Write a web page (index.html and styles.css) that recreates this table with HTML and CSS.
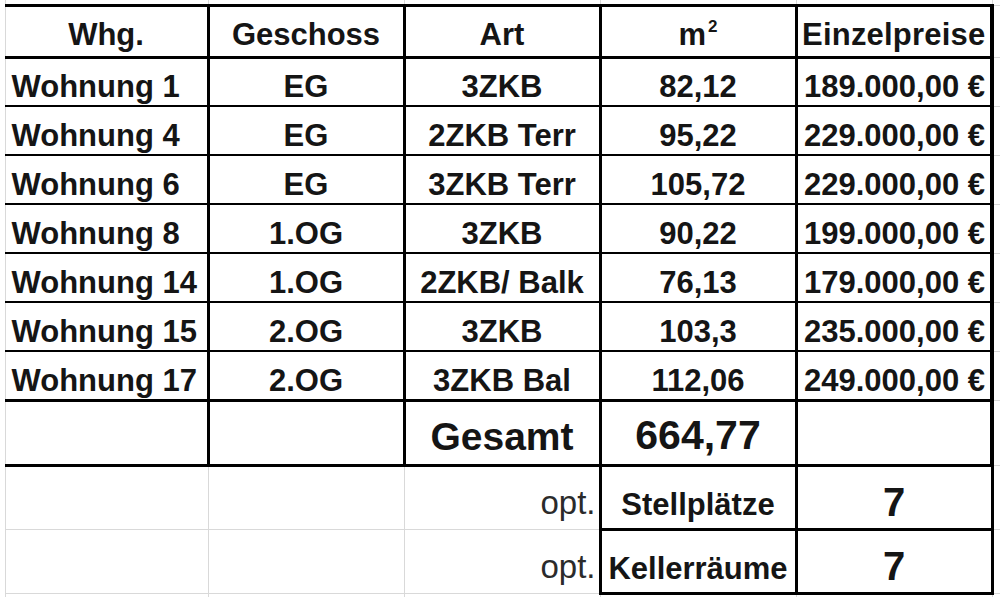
FILE: index.html
```html
<!DOCTYPE html>
<html lang="de">
<head>
<meta charset="utf-8">
<title>Wohnungen</title>
<link rel="stylesheet" href="styles.css">
</head>
<body>
<table class="sheet">
  <colgroup>
    <col class="c-edge">
    <col class="c-a">
    <col class="c-std">
    <col class="c-std">
    <col class="c-std">
    <col class="c-std">
    <col class="c-f">
  </colgroup>
  <tr class="r-top"><td class="edge"></td><td></td><td></td><td></td><td></td><td></td><td class="f"></td></tr>
  <tr class="r-head">
    <td class="edge"></td>
    <th class="t first">Whg.</th>
    <th class="t">Geschoss</th>
    <th class="t">Art</th>
    <th class="t">m<sup>2</sup></th>
    <th class="t last wide">Einzelpreise</th>
    <td class="f"></td>
  </tr>
  <tr class="r-data">
    <td class="edge"></td>
    <td class="t first name">Wohnung 1</td><td class="t">EG</td><td class="t">3ZKB</td><td class="t">82,12</td><td class="t last price">189.000,00 €</td>
    <td class="f"></td>
  </tr>
  <tr class="r-data">
    <td class="edge"></td>
    <td class="t first name">Wohnung 4</td><td class="t">EG</td><td class="t">2ZKB Terr</td><td class="t">95,22</td><td class="t last price">229.000,00 €</td>
    <td class="f"></td>
  </tr>
  <tr class="r-data">
    <td class="edge"></td>
    <td class="t first name">Wohnung 6</td><td class="t">EG</td><td class="t">3ZKB Terr</td><td class="t">105,72</td><td class="t last price">229.000,00 €</td>
    <td class="f"></td>
  </tr>
  <tr class="r-data">
    <td class="edge"></td>
    <td class="t first name">Wohnung 8</td><td class="t">1.OG</td><td class="t">3ZKB</td><td class="t">90,22</td><td class="t last price">199.000,00 €</td>
    <td class="f"></td>
  </tr>
  <tr class="r-data">
    <td class="edge"></td>
    <td class="t first name">Wohnung 14</td><td class="t">1.OG</td><td class="t">2ZKB/ Balk</td><td class="t">76,13</td><td class="t last price">179.000,00 €</td>
    <td class="f"></td>
  </tr>
  <tr class="r-data">
    <td class="edge"></td>
    <td class="t first name">Wohnung 15</td><td class="t">2.OG</td><td class="t">3ZKB</td><td class="t">103,3</td><td class="t last price">235.000,00 €</td>
    <td class="f"></td>
  </tr>
  <tr class="r-data r-end">
    <td class="edge"></td>
    <td class="t first name">Wohnung 17</td><td class="t">2.OG</td><td class="t">3ZKB Bal</td><td class="t">112,06</td><td class="t last price">249.000,00 €</td>
    <td class="f"></td>
  </tr>
  <tr class="r-sum">
    <td class="edge"></td>
    <td class="t first"></td><td class="t"></td><td class="t sum-label">Gesamt</td><td class="t sum-value">664,77</td><td class="t last"></td>
    <td class="f"></td>
  </tr>
  <tr class="r-opt">
    <td class="edge"></td>
    <td></td><td></td><td class="opt">opt.</td><td class="box label">Stellplätze</td><td class="box count">7</td>
    <td class="f"></td>
  </tr>
  <tr class="r-opt">
    <td class="edge"></td>
    <td></td><td></td><td class="opt">opt.</td><td class="box label">Kellerräume</td><td class="box count">7</td>
    <td class="f"></td>
  </tr>
  <tr class="r-rest"><td class="edge"></td><td></td><td></td><td></td><td></td><td></td><td class="f"></td></tr>
</table>
</body>
</html>
```

FILE: styles.css
```css
html, body {
  margin: 0;
  padding: 0;
  background: #ffffff;
}

.sheet {
  border-collapse: collapse;
  table-layout: fixed;
  width: 1000px;
  font-family: "Liberation Sans", Arial, sans-serif;
  color: #151515;
}

.c-edge { width: 5px; }
.c-a { width: 203px; }
.c-std { width: 196px; }
.c-f { width: 8px; }

td,
th {
  border: 1px solid #d9d9d9;
  padding: 0;
  white-space: nowrap;
  overflow: visible;
}

.edge {
  border-left: none !important;
  border-top: none !important;
  border-bottom: none !important;
}

.f {
  border-right: none !important;
}

/* heights (collapsed border centres) */
.r-top { height: 5px; }
.r-head { height: 52px; }
.r-data { height: 49px; }
.r-sum { height: 65px; }
.r-opt { height: 64px; }
.r-rest { height: 4px; }

.r-top td { border-top: none; }
.r-rest td { border-bottom: none; }

/* bordered table cells */
.t {
  border-top: 2px solid #000 !important;
  border-bottom: 2px solid #000 !important;
  border-left: 3px solid #000 !important;
  border-right: 3px solid #000 !important;
  text-align: center;
  vertical-align: bottom;
  font-weight: bold;
  font-size: 31px;
  line-height: 31px;
  padding-bottom: 3px;
}

.t.first {
  border-left: 1px solid #d9d9d9 !important;
}

.t.last {
  border-right: 4px solid #000 !important;
}

.r-head .t {
  border-top: 3px solid #000 !important;
  border-bottom: 3px solid #000 !important;
  padding-bottom: 6px;
}

.r-end .t {
  border-bottom: 3px solid #000 !important;
}

.r-sum .t {
  border-top: 3px solid #000 !important;
  border-bottom: 3px solid #000 !important;
  padding-bottom: 8px;
}

.t.name {
  text-align: left;
  padding-left: 6px;
}

.t.price {
  text-align: right;
  padding-right: 5px;
}

.wide {
  letter-spacing: 0.2px;
}

sup {
  font-size: 0.55em;
  line-height: 0;
  vertical-align: 0.75em;
  margin-left: 2px;
}

.sum-label {
  font-size: 39px;
  line-height: 39px;
}

.sum-value {
  font-size: 41px;
  line-height: 41px;
}

.opt {
  text-align: right;
  vertical-align: bottom;
  font-size: 33px;
  line-height: 33px;
  padding-right: 3px;
  padding-bottom: 10px;
  color: #2b2b2b;
}

.box {
  border: 3px solid #000 !important;
  text-align: center;
  vertical-align: bottom;
  font-weight: bold;
  padding-bottom: 8px;
}

.label {
  font-size: 31px;
  line-height: 31px;
}

.box.count {
  font-size: 40px;
  line-height: 40px;
  padding-bottom: 6px;
}
```
